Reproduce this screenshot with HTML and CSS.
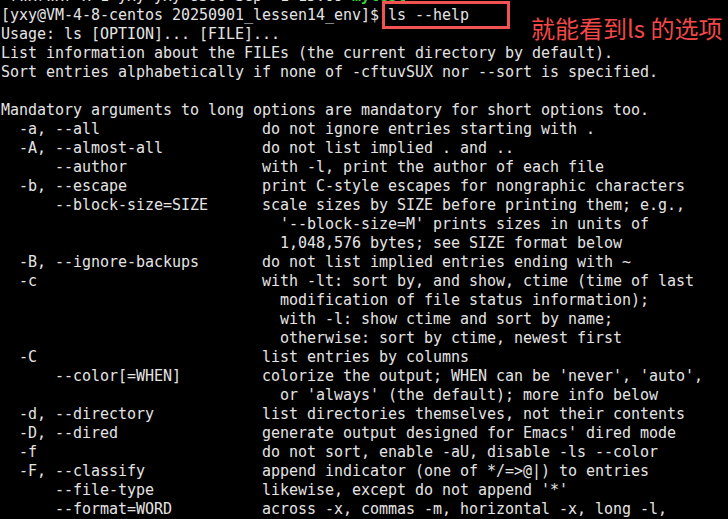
FILE: index.html
```html
<!DOCTYPE html>
<html lang="en">
<head>
<meta charset="utf-8">
<title>ls --help</title>
<link rel="stylesheet" href="styles.css">
</head>
<body>
<div class="term">
<pre class="line partial">-rwxrwxr-x 1 yxy yxy 8360 Sep  1 15:09 <span class="exe">mytest</span></pre>
<pre class="line">[yxy@VM-4-8-centos 20250901_lessen14_env]$ ls --help</pre>
<pre class="line">Usage: ls [OPTION]... [FILE]...</pre>
<pre class="line">List information about the FILEs (the current directory by default).</pre>
<pre class="line">Sort entries alphabetically if none of -cftuvSUX nor --sort is specified.</pre>
<pre class="line"> </pre>
<pre class="line">Mandatory arguments to long options are mandatory for short options too.</pre>
<pre class="line">  -a, --all                  do not ignore entries starting with .</pre>
<pre class="line">  -A, --almost-all           do not list implied . and ..</pre>
<pre class="line">      --author               with -l, print the author of each file</pre>
<pre class="line">  -b, --escape               print C-style escapes for nongraphic characters</pre>
<pre class="line">      --block-size=SIZE      scale sizes by SIZE before printing them; e.g.,</pre>
<pre class="line">                               '--block-size=M' prints sizes in units of</pre>
<pre class="line">                               1,048,576 bytes; see SIZE format below</pre>
<pre class="line">  -B, --ignore-backups       do not list implied entries ending with ~</pre>
<pre class="line">  -c                         with -lt: sort by, and show, ctime (time of last</pre>
<pre class="line">                               modification of file status information);</pre>
<pre class="line">                               with -l: show ctime and sort by name;</pre>
<pre class="line">                               otherwise: sort by ctime, newest first</pre>
<pre class="line">  -C                         list entries by columns</pre>
<pre class="line">      --color[=WHEN]         colorize the output; WHEN can be 'never', 'auto',</pre>
<pre class="line">                               or 'always' (the default); more info below</pre>
<pre class="line">  -d, --directory            list directories themselves, not their contents</pre>
<pre class="line">  -D, --dired                generate output designed for Emacs' dired mode</pre>
<pre class="line">  -f                         do not sort, enable -aU, disable -ls --color</pre>
<pre class="line">  -F, --classify             append indicator (one of */=&gt;@|) to entries</pre>
<pre class="line">      --file-type            likewise, except do not append '*'</pre>
<pre class="line">      --format=WORD          across -x, commas -m, horizontal -x, long -l,</pre>
</div>
<div class="highlight"></div>
<div class="note">就能看到ls 的选项</div>
</body>
</html>
```
FILE: styles.css
```css
html, body {
  margin: 0;
  padding: 0;
  background: #000;
  width: 728px;
  height: 519px;
  overflow: hidden;
}
.term {
  padding: 6px 0 0 1px;
  display: flex;
  flex-direction: column;
}
.line {
  margin: 0;
  height: 19px;
  line-height: 19px;
  font-family: "DejaVu Sans Mono", "Liberation Mono", monospace;
  font-size: 15px;
  letter-spacing: -0.03px;
  color: #e4e4e4;
  white-space: pre;
}
.partial {
  margin-top: -19px;
}
.exe {
  color: #3fd23f;
  font-weight: bold;
}
.highlight {
  position: absolute;
  left: 382px;
  top: 1px;
  width: 122px;
  height: 22px;
  border: 3px solid #f25252;
}
.note {
  position: absolute;
  left: 531px;
  top: 12px;
  font-family: "Noto Sans CJK SC", "Noto Sans", sans-serif;
  font-size: 24px;
  line-height: 32px;
  color: #f24848;
  white-space: nowrap;
}
```
